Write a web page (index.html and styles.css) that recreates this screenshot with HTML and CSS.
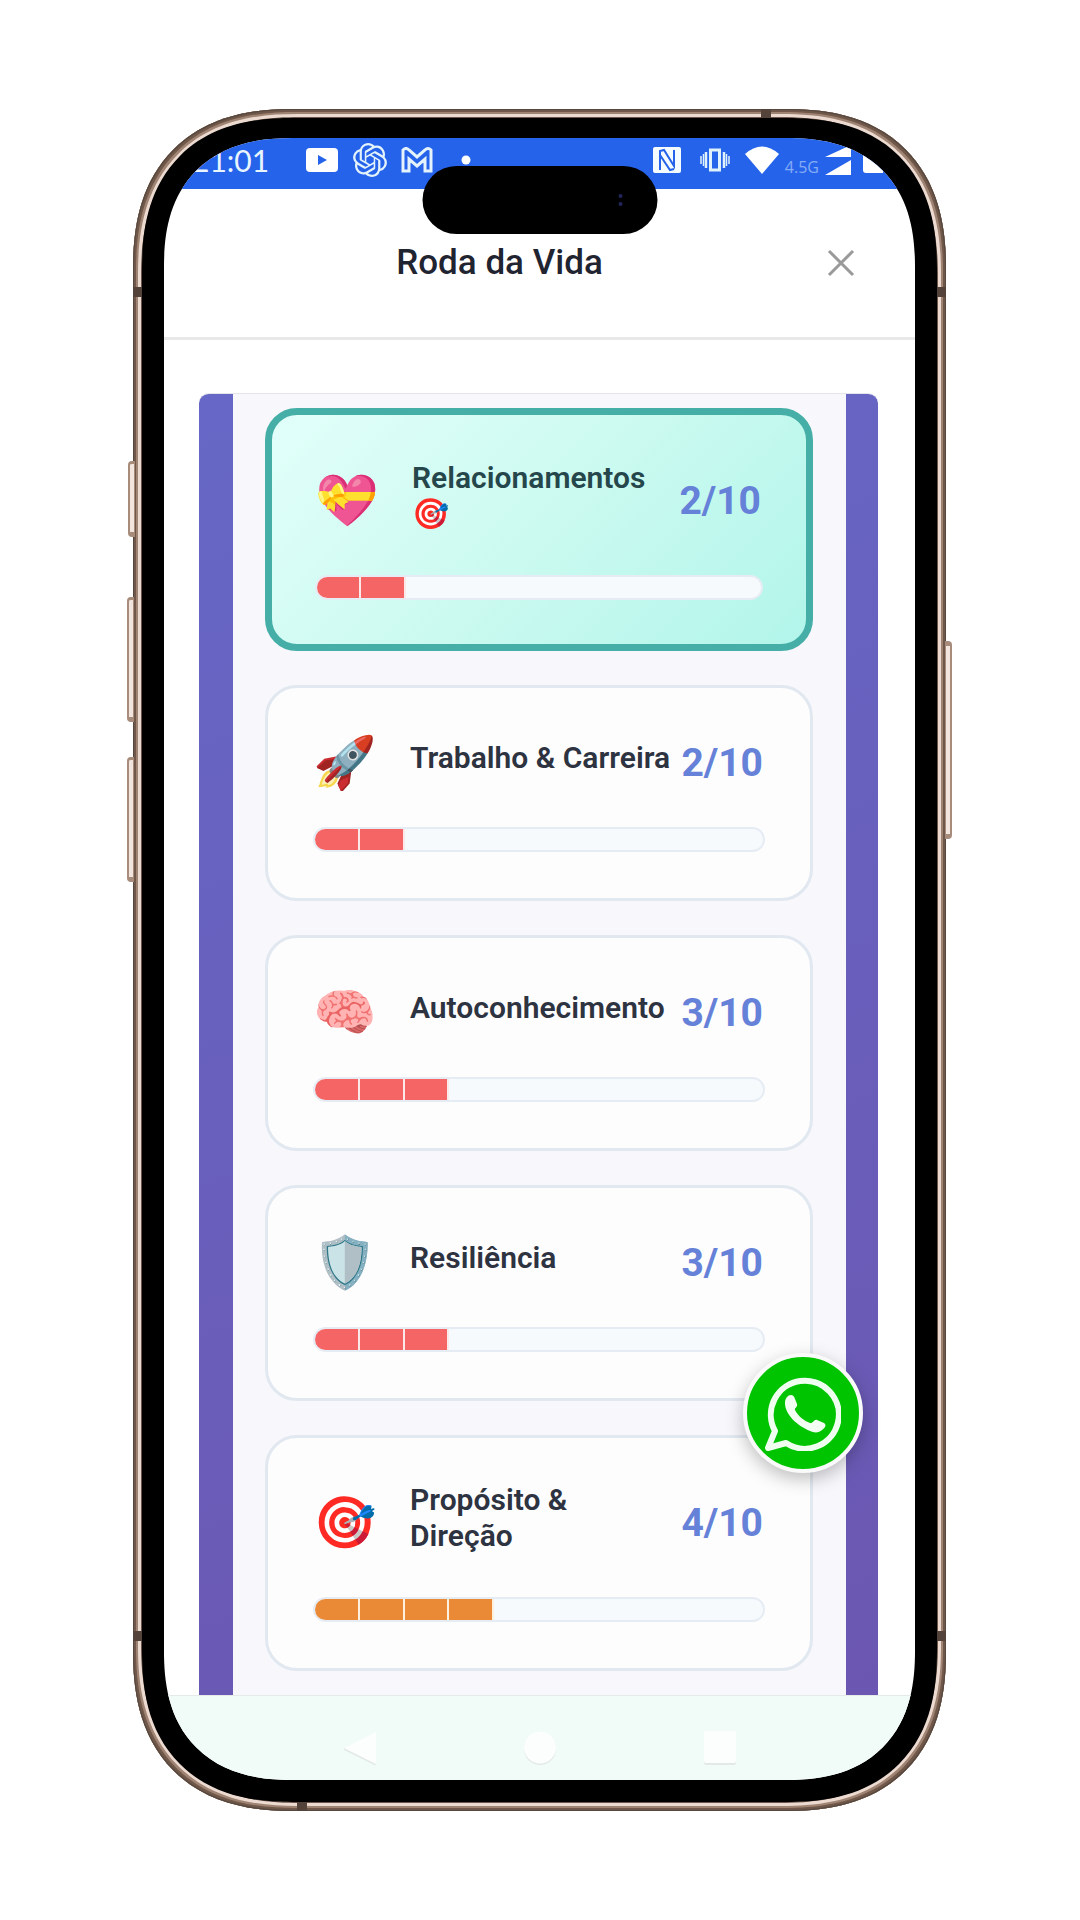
FILE: index.html
```html
<!DOCTYPE html>
<html lang="pt-BR">
<head>
<meta charset="utf-8">
<meta name="viewport" content="width=device-width, initial-scale=1">
<title>Roda da Vida</title>
<link rel="stylesheet" href="styles.css">
</head>
<body>
<div class="phone">
  <span class="side side-action"></span>
  <span class="side side-up"></span>
  <span class="side side-down"></span>
  <span class="side side-power"></span>
  <span class="band band-left band-high"></span>
  <span class="band band-right band-high"></span>
  <span class="band band-left band-low"></span>
  <span class="band band-right band-low"></span>
  <span class="band band-top"></span>
  <span class="band band-bottom"></span>
  <div class="bezel">
    <div class="screen">
      <div class="status">
        <div class="status-group">
          <span class="clock">21:01</span>
          <svg class="st-youtube" width="34" height="24" viewBox="0 0 34 24"><rect x="1" y="0" width="32" height="24" rx="4" fill="#fff"/><path d="M13 7l9 5-9 5z" fill="#2563eb"/></svg>
          <svg width="34" height="34" viewBox="0 0 24 24" fill="#e4f3fb"><path d="M22.28 9.82a5.98 5.98 0 0 0-.52-4.91 6.05 6.05 0 0 0-6.51-2.9A6.07 6.07 0 0 0 4.98 4.18a5.98 5.98 0 0 0-4 2.9 6.05 6.05 0 0 0 .74 7.1 5.98 5.98 0 0 0 .51 4.91 6.05 6.05 0 0 0 6.51 2.9A5.98 5.98 0 0 0 13.26 24a6.06 6.06 0 0 0 5.77-4.21 5.99 5.99 0 0 0 4-2.9 6.06 6.06 0 0 0-.75-7.07zm-9.02 12.61a4.48 4.48 0 0 1-2.88-1.04l.14-.08 4.78-2.76a.79.79 0 0 0 .39-.68v-6.74l2.02 1.17a.07.07 0 0 1 .04.05v5.58a4.5 4.5 0 0 1-4.49 4.5zM3.6 18.3a4.47 4.47 0 0 1-.54-3.01l.14.08 4.78 2.76a.77.77 0 0 0 .78 0l5.84-3.37v2.33a.08.08 0 0 1-.03.06L9.74 19.95a4.5 4.5 0 0 1-6.14-1.65zM2.34 7.9a4.49 4.49 0 0 1 2.37-1.98V11.6a.77.77 0 0 0 .39.68l5.81 3.35-2.02 1.17a.08.08 0 0 1-.07 0l-4.83-2.79A4.5 4.5 0 0 1 2.34 7.87zm16.6 3.86l-5.84-3.39L15.12 7.2a.08.08 0 0 1 .07 0l4.83 2.79a4.49 4.49 0 0 1-.68 8.1v-5.68a.79.79 0 0 0-.4-.65zm2.01-3.02l-.14-.09-4.77-2.78a.78.78 0 0 0-.79 0L9.41 9.23V6.9a.07.07 0 0 1 .03-.06l4.83-2.79a4.5 4.5 0 0 1 6.68 4.66zM8.31 12.86l-2.02-1.16a.08.08 0 0 1-.04-.06V6.07a4.5 4.5 0 0 1 7.38-3.45l-.14.08-4.78 2.76a.79.79 0 0 0-.39.68zm1.1-2.37l2.6-1.5 2.6 1.5v3l-2.6 1.5-2.6-1.5z"/></svg>
          <svg width="32" height="26" viewBox="0 0 32 26" fill="none" stroke="#e4f3fb" stroke-width="3"><path d="M2 24V3q3-3 6 0l8 7 8-7q3-3 6 0v21h-6V12l-8 7-8-7v12z"/></svg>
          <svg class="st-dot" width="10" height="10" viewBox="0 0 10 10"><circle cx="5" cy="5" r="4.500" fill="#fff"/></svg>
        </div>
        <div class="status-group status-right">
          <svg width="28" height="26" viewBox="0 0 28 26"><rect width="28" height="26" rx="2" fill="#f4fcff"/><path d="M7 23V4l4-1 10 16V3M7 8l10 15 4-1" fill="none" stroke="#2563eb" stroke-width="2"/></svg>
          <svg class="st-vibrate" width="32" height="24" viewBox="0 0 32 24" fill="none" stroke="#dff1fb" stroke-width="3"><rect x="11.500" y="2" width="9" height="20"/><path d="M7 4v16M25 4v16" stroke-width="2.500"/><path d="M2 8v8M30 8v8M4.500 6v12M27.500 6v12" stroke-width="1.500"/></svg>
          <svg class="st-wifi" width="34" height="28" viewBox="0 0 34 28"><path d="M0 8Q17-7 34 8L17 28z" fill="#fff"/></svg>
          <span class="net">4.5G</span>
          <svg width="26" height="30" viewBox="0 0 26 30" fill="#fff"><path d="M26 0v12H0zM26 15v15H0z"/></svg>
          <svg class="st-battery" width="20" height="26" viewBox="0 0 20 26"><path d="M3 2h4V0h6v2h7v24H3q-3 0-3-3V5q0-3 3-3z" fill="#fff"/></svg>
        </div>
      </div>
      <div class="island"><span></span><span></span></div>

      <header class="header">
        <h1>Roda da Vida</h1>
        <button class="close" type="button" aria-label="Fechar"><svg width="28" height="28" viewBox="0 0 28 28"><path d="M2 2l24 24M26 2L2 26" stroke="#9a9a9a" stroke-width="3"/></svg></button>
      </header>

      <main class="content">
        <div class="panel">
          <ul class="areas">
            <li class="card card-active">
              <div class="row"><span class="emoji">💝</span><h2>Relacionamentos 🎯</h2><strong>2/10</strong></div>
              <div class="bar"><i></i><i></i></div>
            </li>
            <li class="card">
              <div class="row"><span class="emoji">🚀</span><h2>Trabalho &amp; Carreira</h2><strong>2/10</strong></div>
              <div class="bar"><i></i><i></i></div>
            </li>
            <li class="card">
              <div class="row"><span class="emoji">🧠</span><h2>Autoconhecimento</h2><strong>3/10</strong></div>
              <div class="bar"><i></i><i></i><i></i></div>
            </li>
            <li class="card">
              <div class="row"><span class="emoji">🛡️</span><h2>Resiliência</h2><strong>3/10</strong></div>
              <div class="bar"><i></i><i></i><i></i></div>
            </li>
            <li class="card">
              <div class="row"><span class="emoji">🎯</span><h2>Propósito &amp;<br>Direção</h2><strong>4/10</strong></div>
              <div class="bar bar-mid"><i></i><i></i><i></i><i></i></div>
            </li>
          </ul>
        </div>
      </main>

      <a class="whatsapp" href="#" aria-label="WhatsApp"><svg width="76" height="76" viewBox="0 0 76 76"><path d="M3 73l7-17A34 34 0 1 1 21 68z" fill="none" stroke="#effff0" stroke-width="6" stroke-linejoin="round"/><path d="M20 28c0-5 3-8 6-8 2 0 3 1 4 4l2 5c1 3-3 4-2 6 3 6 9 11 15 13 3 1 4-4 7-3l7 3c3 2 1 5-2 7-3 3-8 3-12 1C33 51 20 40 20 28z" fill="#f4fff4"/></svg></a>

      <nav class="nav">
        <button type="button" aria-label="Voltar"><svg width="34" height="34" viewBox="0 0 34 34"><path d="M33 1v33L1 17z" fill="#fcfefd"/><path d="M1 18l32 16" stroke="#e3e9e7" stroke-width="1.500"/></svg></button>
        <button type="button" aria-label="Início"><svg width="34" height="34" viewBox="0 0 34 34"><circle cx="17" cy="18" r="16" fill="#e3e9e7"/><circle cx="17" cy="16.500" r="16" fill="#fcfefd"/></svg></button>
        <button type="button" aria-label="Recentes"><svg width="34" height="34" viewBox="0 0 34 34"><rect x="1" y="2" width="32" height="32" rx="2" fill="#e3e9e7"/><rect x="1" y="0" width="32" height="32" rx="2" fill="#fcfefd"/></svg></button>
      </nav>
    </div>
  </div>
</div>
</body>
</html>
```
FILE: styles.css
```css
* { box-sizing: border-box; }

body {
  margin: 0;
  padding: 109px 134px 109px 133px;
  background: #fff;
  font-family: Roboto, "Liberation Sans", sans-serif;
  color: #2d3340;
}

h1, h2, ul { margin: 0; padding: 0; }
ul { list-style: none; }
svg { display: block; flex: none; }
button { border: 0; padding: 0; background: none; }

/* Device shell */
.phone {
  position: relative;
  padding: 9px;
  border-radius: 138px;
  background: #c3a797;
  box-shadow:
    inset 0 0 0 1px #57483f,
    inset 0 0 0 3px #6f5749,
    inset 0 0 0 5px #a08473,
    inset 0 0 0 8px #ecd9cf,
    inset 0 0 0 9px #6b5549;
}

.bezel {
  padding: 20px 22px 22px;
  border-radius: 129px;
  background: #000;
}

.screen {
  position: relative;
  overflow: hidden;
  border-radius: 110px;
  background: #fff;
}

/* Continuous corners where the browser can draw them */
@supports (corner-shape: superellipse(1.26)) {
  .phone, .bezel, .screen { corner-shape: superellipse(1.26); }
  .phone { border-radius: 161px; }
  .bezel { border-radius: 151px; }
  .screen { border-radius: 129px; }
}

.side {
  position: absolute;
  width: 7px;
  border: 1px solid #a78b7b;
  border-width: 3px 1px 5px 2px;
  background: #f1e5de;
}
.side-action { left: -5px; top: 352px; height: 76px; }
.side-up { left: -6px; top: 488px; height: 125px; }
.side-down { left: -6px; top: 648px; height: 125px; }
.side-power { right: -6px; top: 532px; height: 198px; border-width: 5px 2px 5px 1px; }
.side-action, .side-up, .side-down { border-radius: 4px 0 0 4px; }
.side-power { border-radius: 0 4px 4px 0; }

.band { position: absolute; width: 9px; height: 10px; background: #54433b; }
.band-left { left: 0; }
.band-right { right: 0; }
.band-high { top: 178px; }
.band-low { bottom: 170px; }
.band-top { top: 0; right: 175px; width: 10px; height: 9px; }
.band-bottom { bottom: 0; left: 164px; width: 10px; height: 9px; }

/* Android status bar */
.status {
  display: flex;
  justify-content: space-between;
  height: 51px;
  padding: 0 32px 8px 28px;
  background: #2563eb;
}
.status-group { display: flex; align-items: center; gap: 14px; }
.status-right { gap: 6px; }
.clock {
  width: 99px;
  font: 400 30px/40px Lato, sans-serif;
  color: #e8f5ff;
}
.st-dot { margin-left: 14px; }
.st-vibrate { margin-left: 12px; }
.st-wifi { margin-left: 8px; }
.net { font: 400 16px/20px "Open Sans", sans-serif; color: #86acf6; padding-top: 14px; }
.st-battery { margin-left: 6px; }

.island {
  position: absolute;
  top: 28px;
  left: 50%;
  width: 235px;
  height: 68px;
  transform: translateX(-50%);
  border-radius: 34px;
  background: #000;
  display: flex;
  flex-direction: column;
  align-items: flex-end;
  justify-content: center;
  gap: 4px;
  padding-right: 35px;
}
.island span { width: 4px; height: 4px; border-radius: 50%; background: #24245c; }

/* Header */
.header {
  display: flex;
  align-items: center;
  height: 151px;
  padding-right: 60px;
  border-bottom: 3px solid #e8e8e8;
}
.header h1 {
  flex: 1;
  padding-left: 8px;
  text-align: center;
  font-size: 35px;
  line-height: 40px;
  font-weight: 500;
  color: #1f2430;
}

/* Life areas */
.content { padding: 53px 37px 0 35px; }
.panel {
  padding: 0 32px 0 34px;
  border-top: 1px solid #e4e4ea;
  border-radius: 10px 10px 0 0;
  background: linear-gradient(160deg, #6667c6, #6b57b1);
}
.areas {
  display: flex;
  flex-direction: column;
  gap: 34px;
  padding: 14px 33px 24px 32px;
  background: #f7f7fc;
}
.card {
  padding: 44px 45px 46px;
  border: 3px solid #e2e8f0;
  border-radius: 32px;
  background: #fdfdfe;
}
.card-active {
  padding: 45px 43px 44px;
  border: 7px solid #45aea6;
  background: linear-gradient(135deg, #e2fffa, #cbfaf0 50%, #b2f5ea);
}
.row {
  display: flex;
  align-items: center;
  min-height: 62px;
  margin-bottom: 33px;
}
.emoji {
  width: 97px;
  flex: none;
  font-size: 51px;
  line-height: 60px;
}
.row h2 {
  flex: 1;
  padding-bottom: 10px;
  font-size: 30px;
  line-height: 36px;
  font-weight: 600;
}
.row strong {
  padding-right: 2px;
  font-size: 39px;
  line-height: 44px;
  font-weight: 700;
  color: #6581d8;
}
.card-active h2 { color: #25474c; }

.bar {
  display: flex;
  height: 25px;
  overflow: hidden;
  border: 2px solid #e6ecf4;
  border-radius: 13px;
  background: #f7fafd;
}
.bar i {
  width: 10%;
  border-right: 2px solid #fbe9ea;
  background: #f56565;
}
.bar-mid i { border-color: #fdf0df; background: #ea8a37; }

/* Floating chat link */
.whatsapp {
  position: absolute;
  right: 52px;
  bottom: 307px;
  display: grid;
  place-items: center;
  width: 120px;
  height: 120px;
  border: 4px solid #fafafa;
  border-radius: 50%;
  background: #00c400;
  box-shadow: 0 6px 18px rgba(0, 0, 0, .25);
}

/* Android navigation */
.nav {
  display: flex;
  justify-content: center;
  align-items: center;
  gap: 146px;
  height: 85px;
  padding-top: 20px;
  border-top: 1px solid #e4ebe9;
  background: #f1fbf8;
}
```
